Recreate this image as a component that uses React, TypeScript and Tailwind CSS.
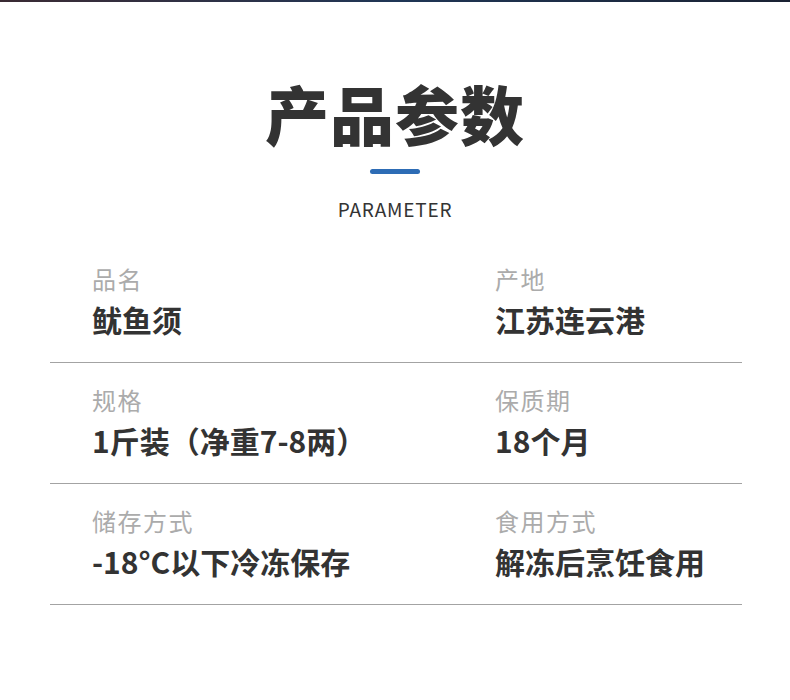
import React from "react";

const rows: [string, string, string, string][] = [
  ["品名", "鱿鱼须", "产地", "江苏连云港"],
  ["规格", "1斤装（净重7-8两）", "保质期", "18个月"],
  ["储存方式", "-18°C以下冷冻保存", "食用方式", "解冻后烹饪食用"],
];

export default function App() {
  return (
    <div
      className="w-[790px] h-[700px] bg-white overflow-hidden"
      style={{ fontFamily: '"Noto Sans CJK SC", "Noto Sans", sans-serif' }}
    >
      <div className="h-[2px] w-full bg-gradient-to-r from-[#3a2a33] via-[#1f3656] to-[#1a2233]" />
      <div className="flex flex-col items-center">
        <h1 className="mt-[78px] text-[64px] leading-none font-black text-[#333333] tracking-[1px]">
          产品参数
        </h1>
        <div className="mt-[25px] w-[50px] h-[5px] rounded-full bg-[#2d6cb5]" />
        <div className="mt-[25px] text-[19px] leading-none text-[#333333] tracking-[0.8px]">
          PARAMETER
        </div>
      </div>
      <div className="ml-[50px] mr-[48px] mt-[24px]">
        {rows.map((r, i) => (
          <div
            key={i}
            className="grid grid-cols-[445px_1fr] border-b border-[#a3a3a3] pb-[25px] pt-[21px]"
          >
            <div className="pl-[42px]">
              <div className="text-[24px] leading-[32px] text-[#ababab] tracking-[1.5px]">{r[0]}</div>
              <div className="mt-[6px] text-[30px] leading-[36px] font-bold text-[#333333]">{r[1]}</div>
            </div>
            <div>
              <div className="text-[24px] leading-[32px] text-[#ababab] tracking-[1.5px]">{r[2]}</div>
              <div className="mt-[6px] text-[30px] leading-[36px] font-bold text-[#333333]">{r[3]}</div>
            </div>
          </div>
        ))}
      </div>
    </div>
  );
}
